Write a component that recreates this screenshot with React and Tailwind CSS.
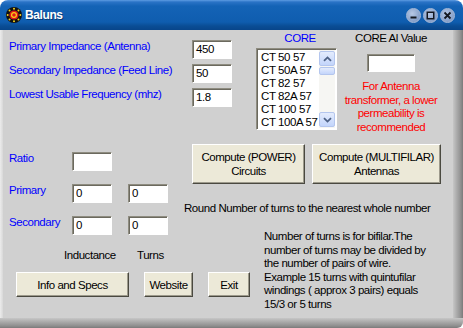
import React from 'react';

const font = "font-['Liberation_Sans',Arial,sans-serif]";

const Field = ({ value = '', className = 'w-[40px] h-[19px]' }) => (
  <div
    className={`${className} shrink-0 bg-white border border-t-[#8e8c80] border-l-[#8e8c80] border-r-white border-b-white shadow-[inset_1px_1px_0_#6b695e] flex items-center pl-[3px] text-[11.5px] text-black leading-none`}
  >
    {value}
  </div>
);

const Button = ({ children, className }) => (
  <div
    className={`${className} shrink-0 bg-[#ece9d8] border border-t-white border-l-white border-r-[#4a4940] border-b-[#4a4940] shadow-[inset_-1px_-1px_0_#9d9a8c] flex flex-col items-center justify-center text-[11.5px] leading-[14px] text-black text-center`}
  >
    {children}
  </div>
);

const Chevron = ({ down }) => (
  <svg width="9" height="6" viewBox="0 0 9 6">
    <path
      d={down ? 'M1 1.2 L4.5 4.6 L8 1.2' : 'M1 4.8 L4.5 1.4 L8 4.8'}
      fill="none"
      stroke="#4d6185"
      strokeWidth="1.8"
    />
  </svg>
);

const ScrollButton = ({ children, className }) => (
  <div
    className={`${className} rounded-[2px] border border-[#b4c6ee] bg-[linear-gradient(to_bottom,#e4ecfd,#c3d5fb)] flex items-center justify-center`}
  >
    {children}
  </div>
);

const CoreList = () => {
  const items = ['CT 50 57', 'CT 50A 57', 'CT 82 57', 'CT 82A 57', 'CT 100 57', 'CT 100A 57'];
  return (
    <div className="mt-[3px] w-[81px] h-[82px] flex bg-white border border-t-[#8e8c80] border-l-[#8e8c80] border-r-white border-b-white shadow-[inset_1px_1px_0_#6b695e] p-[1px]">
      <div className="w-[61px] overflow-hidden pt-[1px]">
        {items.map((it) => (
          <div key={it} className="pl-[3px] text-[11.5px] leading-[13px] tracking-[-0.4px] whitespace-nowrap text-black">
            {it}
          </div>
        ))}
      </div>
      <div className="w-[16px] flex flex-col bg-[#f6f6f3] pt-[1px]">
        <ScrollButton className="h-[15px]">
          <Chevron />
        </ScrollButton>
        <ScrollButton className="mt-[1px] h-[8px]" />
        <div className="flex-1" />
        <ScrollButton className="h-[15px] mb-[1px]">
          <Chevron down />
        </ScrollButton>
      </div>
    </div>
  );
};

const TitleIcon = () => (
  <svg width="16" height="16" viewBox="0 0 16 16">
    <circle cx="8" cy="8" r="8" fill="#111" />
    {[0, 45, 90, 135, 180, 225, 270, 315].map((a) => (
      <circle
        key={a}
        cx={8 + 6.3 * Math.cos((a * Math.PI) / 180)}
        cy={8 + 6.3 * Math.sin((a * Math.PI) / 180)}
        r="1"
        fill="#f5d21a"
      />
    ))}
    <circle cx="8" cy="8" r="4.6" fill="#e01818" />
    <circle cx="8" cy="8" r="3" fill="#f5d21a" />
    <circle cx="8" cy="8" r="1.8" fill="#e01818" />
  </svg>
);

const WinButton = ({ kind }) => (
  <div className="w-[15px] h-[15px] rounded-full border border-[#a9bbd8] bg-[radial-gradient(circle_at_40%_35%,#b7c8e4,#6f8dbd)] flex items-center justify-center">
    <svg width="9" height="9" viewBox="0 0 9 9">
      {kind === 'min' && <rect x="1.5" y="5.5" width="6" height="2" fill="#141820" />}
      {kind === 'max' && (
        <rect x="1.25" y="1.25" width="6.5" height="6.5" fill="none" stroke="#141820" strokeWidth="1.5" />
      )}
      {kind === 'close' && (
        <path d="M1.5 1.5 L7.5 7.5 M7.5 1.5 L1.5 7.5" stroke="#141820" strokeWidth="1.8" />
      )}
    </svg>
  </div>
);

const Label = ({ children, className = '' }) => (
  <div className={`${className} text-[11.5px] leading-[13px] text-[#0000ff] whitespace-nowrap`}>{children}</div>
);

export default function App() {
  return (
    <div className={`${font} tracking-[-0.45px] w-[463px] h-[328px] flex flex-col bg-white`}>
      {/* title bar */}
      <div className="h-[30px] shrink-0 rounded-t-[8px] bg-[linear-gradient(to_bottom,#5d9ce2_0px,#2a73c6_2px,#1463b6_6px,#0f5daf_22px,#0a4d95_26px,#08458a_30px)] flex items-center pl-[6px] pr-[8px]">
        <TitleIcon />
        <div className="ml-[3px] text-white font-bold text-[12px] tracking-[-0.4px] [text-shadow:1px_1px_0_#0a3a74]">Baluns</div>
        <div className="ml-auto flex gap-[2px] mt-[1px]">
          <WinButton kind="min" />
          <WinButton kind="max" />
          <WinButton kind="close" />
        </div>
      </div>

      <div className="h-[288px] flex">
        <div className="w-[3px] bg-[linear-gradient(to_right,#ececec,#d8d8d8)]" />

        {/* client area */}
        <div className="w-[450px] bg-[#d0d0d0] flex flex-col pl-[6px]">
          {/* top section */}
          <div className="h-[114px] flex">
            <div className="mt-[10px] w-[223px] flex flex-col gap-[5px]">
              <div className="h-[19px] flex justify-between">
                <Label>Primary Impedance (Antenna)</Label>
                <Field value="450" />
              </div>
              <div className="h-[19px] flex justify-between">
                <Label>Secondary Impedance (Feed Line)</Label>
                <Field value="50" />
              </div>
              <div className="h-[19px] flex justify-between">
                <Label>Lowest Usable Frequency (mhz)</Label>
                <Field value="1.8" />
              </div>
            </div>

            <div className="ml-[24px] w-[81px] pt-[1px] flex flex-col">
              <div className="pl-[7px] text-center text-[11.5px] leading-[14px] text-[#0000ff]">CORE</div>
              <CoreList />
            </div>

            <div className="ml-[8px] w-[92px] pt-[1px] flex flex-col items-center">
              <div className="text-[11.5px] leading-[14px] text-black whitespace-nowrap">CORE Al Value</div>
              <Field className="mt-[9px] w-[48px] h-[18px]" />
              <div className="mt-[8px] text-[11.5px] leading-[13.5px] text-[#ff0000] text-center whitespace-nowrap">
                For Antenna
                <br />
                transformer, a lower
                <br />
                permeability is
                <br />
                recommended
              </div>
            </div>
          </div>

          {/* ratio / turns section */}
          <div className="h-[91px] flex">
            <div className="w-[160px] mt-[8px] flex flex-col gap-[13px]">
              <div className="h-[19px] flex">
                <Label className="w-[63px]">Ratio</Label>
                <Field />
              </div>
              <div className="h-[19px] flex">
                <Label className="w-[63px]">Primary</Label>
                <Field value="0" />
                <Field value="0" className="ml-[16px] w-[40px] h-[19px]" />
              </div>
              <div className="h-[19px] flex">
                <Label className="w-[63px]">Secondary</Label>
                <Field value="0" />
                <Field value="0" className="ml-[16px] w-[40px] h-[19px]" />
              </div>
            </div>

            <div className="ml-[15px] flex flex-col">
              <div className="flex pl-[8px] gap-[7px]">
                <Button className="w-[113px] h-[40px]">
                  <span>Compute (POWER)</span>
                  <span>Circuits</span>
                </Button>
                <Button className="w-[129px] h-[40px]">
                  <span>Compute (MULTIFILAR)</span>
                  <span>Antennas</span>
                </Button>
              </div>
              <div className="mt-[17px] text-[11.5px] leading-[14px] text-black whitespace-nowrap">
                Round Number of turns to the nearest whole number
              </div>
            </div>
          </div>

          {/* bottom section */}
          <div className="flex">
            <div className="w-[241px] flex flex-col">
              <div className="mt-[13px] flex text-[11.5px] leading-[14px] text-black">
                <span className="ml-[55px] w-[73px]">Inductance</span>
                <span>Turns</span>
              </div>
              <div className="mt-[10px] flex pl-[7px]">
                <Button className="w-[113px] h-[25px]">Info and Specs</Button>
                <Button className="ml-[15px] w-[49px] h-[25px]">Website</Button>
                <Button className="ml-[15px] w-[42px] h-[25px]">Exit</Button>
              </div>
            </div>
            <div className="ml-[14px] mt-[-5px] text-[11.5px] leading-[13.5px] text-black whitespace-nowrap">
              Number of turns is for bifilar.The
              <br />
              number of turns may be divided by
              <br />
              the number of pairs of wire.
              <br />
              Example 15 turns with quintufilar
              <br />
              windings ( approx 3 pairs) equals
              <br />
              15/3 or 5 turns
            </div>
          </div>
        </div>

        <div className="w-[10px] bg-[linear-gradient(to_right,#c6c6c6,#b0b0b0_30%,#8e8e8e_80%,#7a7a7a)]" />
      </div>

      <div className="h-[10px] shrink-0 rounded-br-[6px] bg-[linear-gradient(to_bottom,#c6c6c6,#b0b0b0_30%,#8e8e8e_80%,#7a7a7a)]" />
    </div>
  );
}
